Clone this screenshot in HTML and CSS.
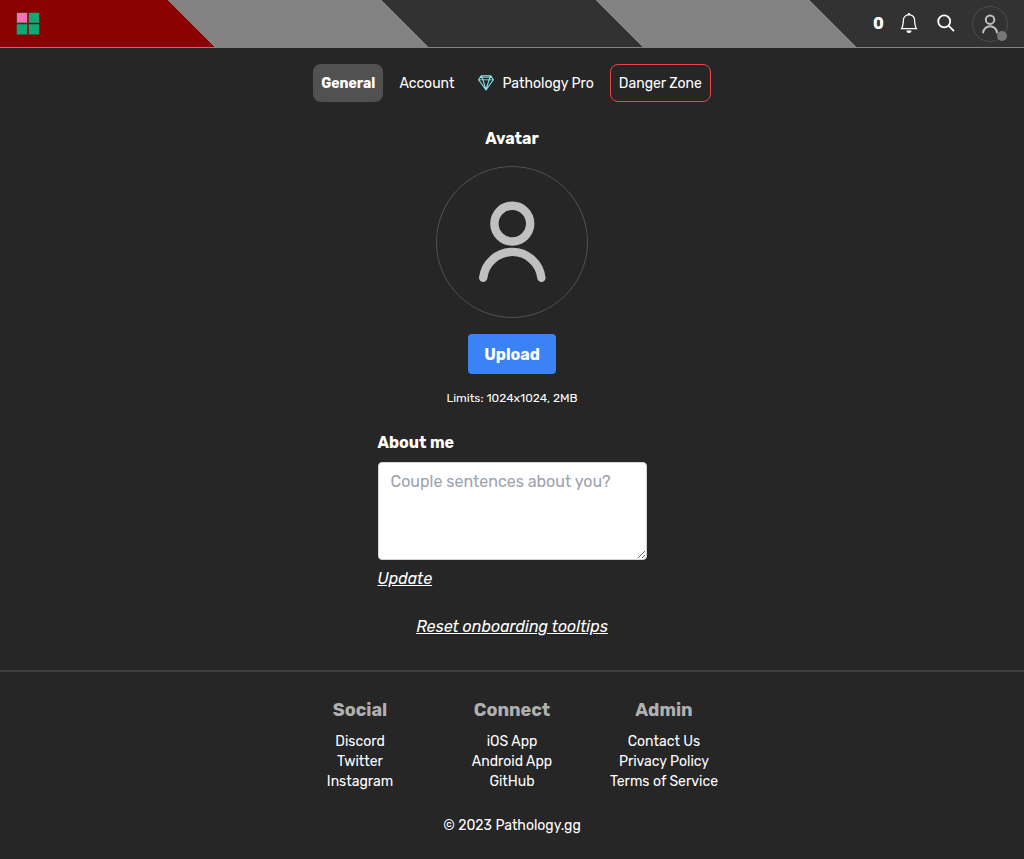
FILE: index.html
```html
<!DOCTYPE html>
<html lang="en">
<head>
<meta charset="utf-8">
<title>Settings - Pathology</title>
<link rel="stylesheet" href="styles.css">
</head>
<body>
<svg class="defs" width="0" height="0">
  <symbol id="person" viewBox="0 0 152 152">
    <g fill="none" stroke="#c0c0c0" stroke-width="8.4" stroke-linecap="round">
      <circle cx="76.3" cy="57.6" r="17.9"/>
      <path d="M47.2 111.8A29.3 29.3 0 0 1 105.4 111.8"/>
    </g>
  </symbol>
</svg>
<header class="header">
  <a class="logo" href="#"><svg width="24" height="24" viewBox="0 0 24 24">
    <path fill="#3c5a3f" d="M.5 .5h23v22.500H.5z"/>
    <path fill="#8b0000" d="M11.5 0h1v24h-1zM0 11h24v1H0z"/>
    <path fill="#f472b6" d="M1 1h10v9.500H1z"/>
    <path fill="#10a873" d="M13 1h10v9.500H13zM1 12.500h10v9.500H1zM13 12.500h10v9.500H13z"/>
  </svg></a>
  <div class="tools">
    <span class="score">0</span>
    <svg class="bell" width="20" height="20" viewBox="0 0 16 16" fill="#fff"><path d="M8 16a2 2 0 0 0 2-2H6a2 2 0 0 0 2 2zM8 1.918l-.797.161A4.002 4.002 0 0 0 4 6c0 .628-.134 2.197-.459 3.742-.16.767-.376 1.566-.663 2.258h10.244c-.287-.692-.502-1.49-.663-2.258C12.134 8.197 12 6.628 12 6a4.002 4.002 0 0 0-3.203-3.92L8 1.917zM14.22 12c.223.447.481.801.78 1H1c.299-.199.557-.553.78-1C2.680 10.200 3 6.880 3 6c0-2.420 1.720-4.440 4.005-4.901a1 1 0 1 1 1.990 0A5.002 5.002 0 0 1 13 6c0 .880.320 4.200 1.220 6z"/></svg>
    <svg class="search" width="20" height="20" viewBox="0 0 20 20" fill="none" stroke="#fff" stroke-width="1.8"><circle cx="8.2" cy="8.3" r="6"/><path d="M12.5 12.6L18 18.1"/></svg>
    <div class="profile"><svg class="face" viewBox="0 0 152 152"><use href="#person"/></svg><i class="status"></i></div>
  </div>
</header>
<main class="main">
  <nav class="tabs">
    <a class="tab active">General</a>
    <a class="tab">Account</a>
    <a class="tab pro"><svg class="gem" width="16" height="16" viewBox="0 0 16 16" fill="none" stroke="#8ee6f0" stroke-width="1.1" stroke-linejoin="round"><path d="M3.2 .9H12.8L15.4 4.8L8 15L.6 4.8zM3.2 .9L5 4.8L8 15L11 4.8L12.8 .9"/><path d="M.6 4.8H15.4M3.2 2.3H12.8" stroke-width=".8"/></svg><span>Pathology Pro</span></a>
    <a class="tab danger">Danger Zone</a>
  </nav>
  <h2 class="title">Avatar</h2>
  <div class="avatar"><svg class="face" viewBox="0 0 152 152"><use href="#person"/></svg></div>
  <button class="upload">Upload</button>
  <p class="limits">Limits: 1024x1024, 2MB</p>
  <form class="about">
    <label class="label" for="bio">About me</label>
    <textarea class="bio" id="bio" placeholder="Couple sentences about you?"></textarea>
    <a class="link update">Update</a>
  </form>
  <a class="link reset">Reset onboarding tooltips</a>
</main>
<footer class="footer">
  <div class="columns">
    <section class="column"><h3 class="heading">Social</h3><a>Discord</a><a>Twitter</a><a>Instagram</a></section>
    <section class="column"><h3 class="heading">Connect</h3><a>iOS App</a><a>Android App</a><a>GitHub</a></section>
    <section class="column"><h3 class="heading">Admin</h3><a>Contact Us</a><a>Privacy Policy</a><a>Terms of Service</a></section>
  </div>
  <p class="copyright">© 2023 Pathology.gg</p>
</footer>
</body>
</html>
```
FILE: styles.css
```css
* { box-sizing: border-box; }
body { margin: 0; height: 859px; overflow: hidden; background: #262626; color: #fff; font: 16px/24px Rubik, Roboto, sans-serif; }
h2, h3, p { margin: 0; }
svg { display: block; flex: none; }
.defs { position: absolute; }
.header { height: 48px; padding: 0 16px; display: flex; align-items: center; justify-content: space-between; border-bottom: 1px solid #838383; background: linear-gradient(45deg, #8b0000 20%, #838383 20% 40%, #323232 40% 60%, #838383 60% 80%, #323232 80%) padding-box; }
.logo { margin-top: 1px; }
.tools { display: flex; align-items: center; }
.score { font-weight: 700; width: 11px; text-align: center; margin: 1px 15px 0 0; }
.bell { margin: 0 17px 1px 0; }
.search { margin: 0 16px 1px 0; }
.profile { position: relative; width: 36px; height: 36px; border: 1px solid #4d4d4d; border-radius: 50%; }
.profile .face { width: 36px; height: 36px; margin: -1px; }
.status { position: absolute; right: 0; bottom: 0; width: 10px; height: 10px; border-radius: 50%; background: #777; }
.main { display: flex; flex-direction: column; align-items: center; height: 622px; padding-top: 16px; }
.tabs { display: flex; gap: 8px; height: 38px; font-size: 14px; line-height: 20px; white-space: nowrap; }
.tab { display: flex; align-items: center; justify-content: center; padding: 1px 8px 0; border-radius: 8px; }
.active { font-weight: 700; background: #515151; }
.pro { gap: 8px; }
.gem { margin-bottom: 1px; }
.danger { border: 1px solid #ef4444; }
.title { font-size: 16px; line-height: 24px; margin-top: 24px; padding-top: 1px; height: 24px; }
.avatar { width: 152px; height: 152px; margin-top: 16px; border: 1px solid #515151; border-radius: 50%; }
.avatar .face { width: 152px; height: 152px; margin: -1px; }
.upload { width: 88px; height: 40px; margin-top: 16px; padding: 1px 0 0; border: 0; border-radius: 4px; background: #3b82f6; color: #fff; font: 700 16px/24px Rubik, Roboto, sans-serif; }
.limits { margin-top: 16px; font-size: 12px; line-height: 16px; }
.about { display: flex; flex-direction: column; align-items: flex-start; width: 269px; margin-top: 24px; }
.label { height: 24px; padding-top: 1px; font-weight: 700; }
.bio { width: 100%; height: 98px; margin: 8px 0 7px; padding: 7px 12px; border: 1px solid #d4d4d4; border-radius: 4px; background: #fff; font: 16px/24px Rubik, Roboto, sans-serif; }
.bio::placeholder { color: #9ca3af; }
.link { font-style: italic; text-decoration: underline; }
.reset { margin-top: 24px; }
.footer { border-top: 2px solid #3f3f3f; padding-top: 24px; font-size: 14px; line-height: 20px; text-align: center; }
.columns { display: grid; grid-template-columns: repeat(3, 120px); justify-content: center; gap: 32px; }
.column { display: flex; flex-direction: column; }
.heading { margin-bottom: 8px; font-size: 18px; line-height: 28px; color: #b0b0b0; }
.copyright { margin-top: 24px; }
```
